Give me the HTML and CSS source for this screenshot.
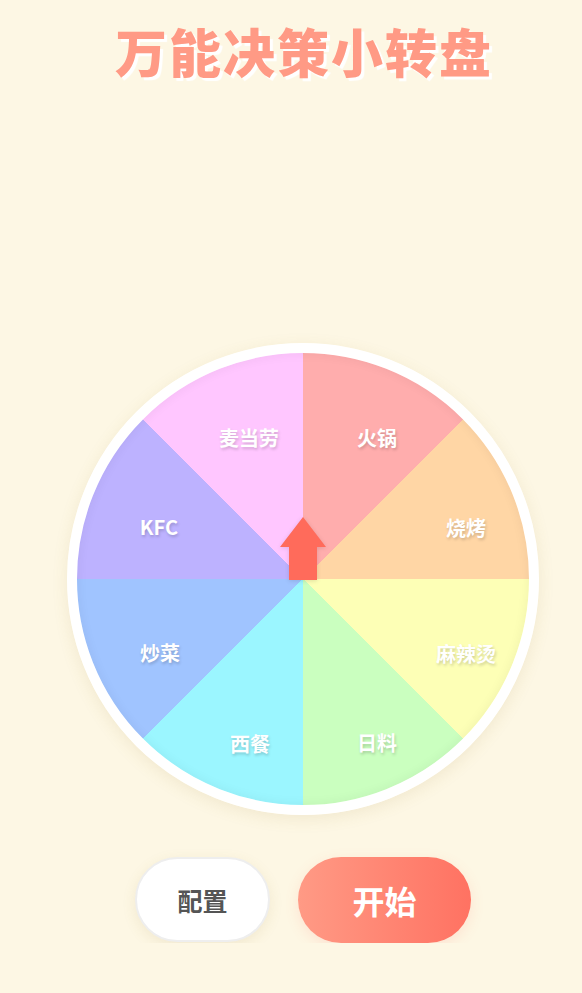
FILE: index.html
```html
<!DOCTYPE html>
<html>
<head>
  <meta charset="utf-8">
  <title>万能决策小转盘</title>
  <link rel="stylesheet" href="styles.css">
</head>
<body>
  <div class="page">
    <h1 class="title">万能决策小转盘</h1>

    <div class="wheel-box">
      <div class="wheel">
        <span class="label seg-1">火锅</span>
        <span class="label seg-2">烧烤</span>
        <span class="label seg-3">麻辣烫</span>
        <span class="label seg-4">日料</span>
        <span class="label seg-5">西餐</span>
        <span class="label seg-6">炒菜</span>
        <span class="label seg-7">KFC</span>
        <span class="label seg-8">麦当劳</span>
      </div>
      <svg class="pointer" width="48" height="64" viewBox="0 0 48 64">
        <polygon points="24,0 47,30 38,30 38,63 10,63 10,30 1,30" fill="#ff6b5b"/>
      </svg>
    </div>

    <div class="actions">
      <button class="btn btn-config">配置</button>
      <button class="btn btn-start">开始</button>
    </div>
  </div>
</body>
</html>
```

FILE: styles.css
```css
body {
  margin: 0;
  background-color: #fdf7e4;
  font-family: "Noto Sans CJK SC", "Noto Sans", sans-serif;
}
.page {
  padding-left: 24px;
  display: flex;
  flex-direction: column;
  align-items: center;
}
.title {
  margin: 20px 0 0;
  padding-left: 2px;
  font-size: 52px;
  line-height: 62px;
  font-weight: 900;
  color: #ff9a85;
  text-shadow: 3px 3px 1px #fff;
  letter-spacing: 2px;
}
.wheel-box {
  position: relative;
  margin-top: 261px;
}
.wheel {
  position: relative;
  width: 452px;
  height: 452px;
  border-radius: 50%;
  border: 10px solid #fff;
  background: conic-gradient(
    #ffadad 0deg 45deg,
    #ffd6a5 45deg 90deg,
    #fdffb6 90deg 135deg,
    #caffbf 135deg 180deg,
    #9bf6ff 180deg 225deg,
    #a0c4ff 225deg 270deg,
    #bdb2ff 270deg 315deg,
    #ffc6ff 315deg 360deg
  );
  box-shadow: 0 4px 16px rgba(160, 130, 60, 0.12), inset 0 0 12px rgba(0, 0, 0, 0.06);
}
.label {
  position: absolute;
  transform: translate(-50%, -50%);
  color: #fff;
  font-size: 20px;
  font-weight: 700;
  white-space: nowrap;
  text-shadow: 1px 2px 3px rgba(0, 0, 0, 0.18);
}
.seg-1 { left: 300px; top: 84px; }
.seg-2 { left: 389px; top: 174px; }
.seg-3 { left: 389px; top: 300px; }
.seg-4 { left: 300px; top: 389px; }
.seg-5 { left: 173px; top: 390px; }
.seg-6 { left: 83px; top: 299px; }
.seg-7 { left: 82px; top: 173px; }
.seg-8 { left: 172px; top: 84px; }
.pointer {
  position: absolute;
  left: 212px;
  top: 174px;
  filter: drop-shadow(0 1px 2px rgba(0, 0, 0, 0.12));
}
.actions {
  display: flex;
  gap: 28px;
  margin-top: 42px;
}
.btn {
  border: none;
  border-radius: 44px;
  font-family: "Noto Sans CJK SC", sans-serif;
  font-weight: 700;
  cursor: pointer;
}
.btn-config {
  width: 135px;
  height: 85px;
  background: #fff;
  border: 2px solid #eeeeee;
  color: #555;
  font-size: 25px;
  box-shadow: 0 4px 14px rgba(160, 130, 60, 0.12);
}
.btn-start {
  width: 173px;
  height: 86px;
  background: linear-gradient(to right, #ff9a85, #ff7262);
  color: #fff;
  font-size: 32px;
  box-shadow: 0 4px 14px rgba(255, 114, 98, 0.15);
}
```
